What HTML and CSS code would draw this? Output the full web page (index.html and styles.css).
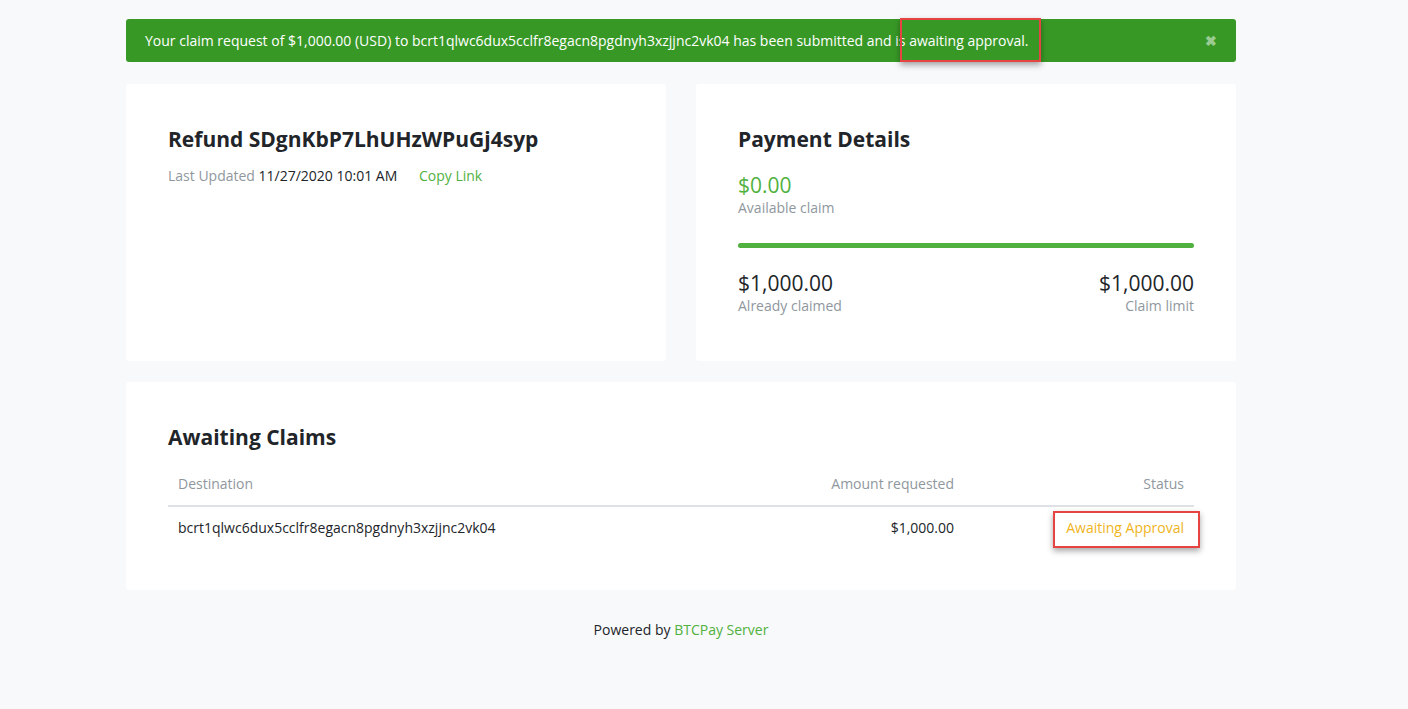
FILE: index.html
```html
<!DOCTYPE html>
<html>
<head>
<meta charset="utf-8">
<link rel="stylesheet" href="styles.css">
</head>
<body>
<div class="page">
  <div class="alert">
    <span class="alert-text">Your claim request of $1,000.00 (USD) to bcrt1qlwc6dux5cclfr8egacn8pgdnyh3xzjjnc2vk04 has been submitted and is awaiting approval.</span>
    <span class="alert-close">&#x2716;</span>
    <span class="mark mark-alert"></span>
  </div>
  <div class="cards">
    <div class="card">
      <h2 class="title">Refund SDgnKbP7LhUHzWPuGj4syp</h2>
      <div class="meta">
        <span class="muted">Last Updated</span> <span class="dark">11/27/2020 10:01 AM</span>
        <a class="link copy">Copy Link</a>
      </div>
    </div>
    <div class="card">
      <h2 class="title">Payment Details</h2>
      <div class="amount green">$0.00</div>
      <div class="label">Available claim</div>
      <div class="progress"><div class="bar" style="width:100%"></div></div>
      <div class="split">
        <div>
          <div class="amount">$1,000.00</div>
          <div class="label">Already claimed</div>
        </div>
        <div class="right">
          <div class="amount">$1,000.00</div>
          <div class="label">Claim limit</div>
        </div>
      </div>
    </div>
  </div>
  <div class="card wide">
    <h2 class="title">Awaiting Claims</h2>
    <table class="table">
      <thead>
        <tr><th class="dest">Destination</th><th class="num">Amount requested</th><th class="num">Status</th></tr>
      </thead>
      <tbody>
        <tr><td>bcrt1qlwc6dux5cclfr8egacn8pgdnyh3xzjjnc2vk04</td><td class="num">$1,000.00</td><td class="num status"><span class="status-wrap">Awaiting Approval<span class="mark mark-status"></span></span></td></tr>
      </tbody>
    </table>
  </div>
  <div class="footer">Powered by <a class="link">BTCPay Server</a></div>
</div>
</body>
</html>
```

FILE: styles.css
```css
html, body {
  margin: 0;
  padding: 0;
  background: #f8f9fa;
  font-family: "Open Sans", "Liberation Sans", sans-serif;
  font-size: 14px;
  color: #212529;
}
.page {
  width: 1110px;
  margin-left: 126px;
  padding-top: 19px;
}
.alert {
  position: relative;
  display: flex;
  align-items: center;
  justify-content: space-between;
  background: #389826;
  color: #fff;
  height: 43px;
  box-sizing: border-box;
  padding: 0 19px 0 19px;
  border-radius: 3px;
  font-size: 14px;
}
.alert-close {
  color: rgba(255,255,255,0.5);
  font-size: 14px;
  font-weight: bold;
}
.mark {
  position: absolute;
  border: 2px solid #e64343;
  box-shadow: 0 3px 6px rgba(0,0,0,0.35);
  box-sizing: border-box;
}
.mark-alert {
  left: 774px;
  top: -1px;
  width: 141px;
  height: 44px;
}
.cards {
  display: grid;
  grid-template-columns: 540px 540px;
  gap: 30px;
  margin-top: 22px;
}
.card {
  background: #fff;
  border-radius: 3px;
  padding: 39px 42px 0;
  height: 277px;
  box-sizing: border-box;
}
.title {
  margin: 0;
  font-size: 21px;
  font-weight: 700;
  line-height: 32px;
  color: #212529;
}
.meta {
  margin-top: 11px;
  line-height: 20px;
}
.muted { color: #8f979e; }
.dark { color: #212529; }
.link {
  color: #51b13e;
  text-decoration: none;
}
.copy { margin-left: 18px; }
.amount {
  font-size: 21px;
  line-height: 26px;
  color: #212529;
}
.green { color: #51b13e; }
.card .title + .amount { margin-top: 17px; }
.label {
  color: #8f979e;
  line-height: 19px;
}
.progress {
  margin-top: 26px;
  height: 5px;
  background: #e9ecef;
  border-radius: 3px;
}
.bar {
  height: 5px;
  background: #51b13e;
  border-radius: 3px;
}
.split {
  display: flex;
  justify-content: space-between;
  margin-top: 22px;
}
.right { text-align: right; }
.card.wide {
  margin-top: 21px;
  height: 208px;
  padding-top: 38px;
}
.wide .title { line-height: 34px; }
.table {
  width: 100%;
  border-collapse: collapse;
  margin-top: 14px;
}
.table th {
  font-weight: 400;
  color: #8f979e;
  text-align: left;
  padding: 6px 10px 11px;
  border-bottom: 2px solid #dee2e6;
  line-height: 20px;
}
.table td {
  padding: 11px 10px;
  line-height: 20px;
}
.table .num { text-align: right; }
.table th.num:nth-child(2) { width: 200px; }
.table th.num:nth-child(3) { width: 210px; }
.status { color: #f0b41c; }
.status-wrap { position: relative; }
.mark-status {
  left: -13px;
  top: -7px;
  width: 147px;
  height: 37px;
}
.footer {
  text-align: center;
  margin-top: 30px;
  line-height: 20px;
}
```
